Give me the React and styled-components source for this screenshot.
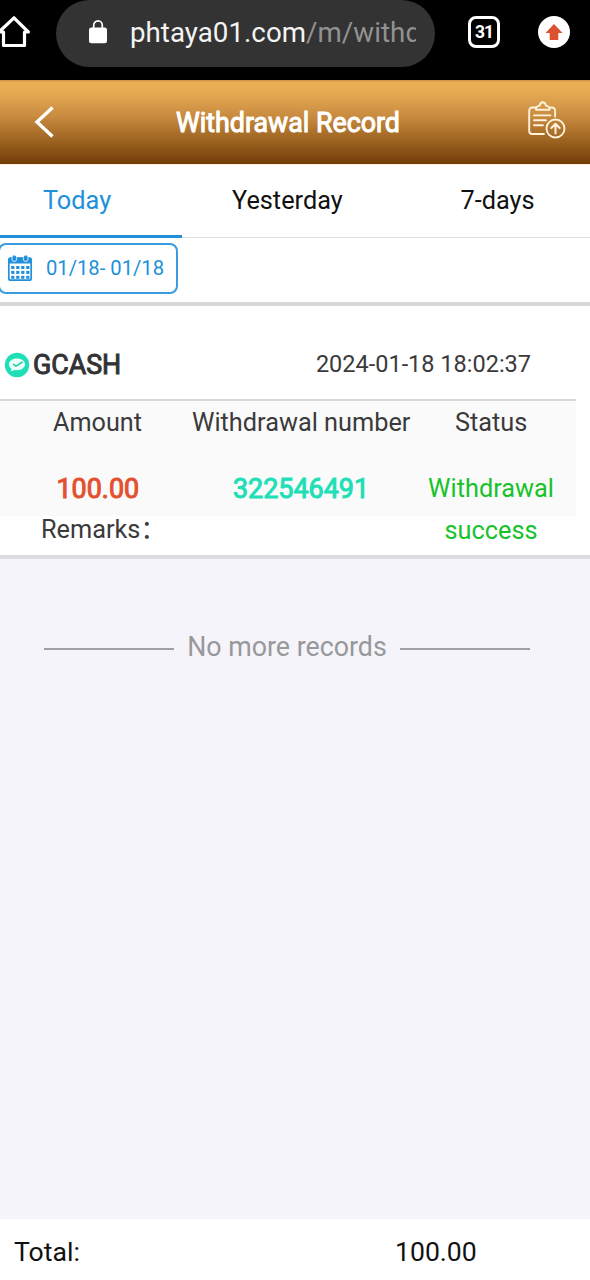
import React from 'react';
import styled, { createGlobalStyle } from 'styled-components';

const GlobalStyle = createGlobalStyle`
  * { box-sizing: border-box; }
  body {
    margin: 0;
    background: #f4f4fa;
    font-family: Roboto, "Noto Sans CJK SC", sans-serif;
    color: #333;
  }
`;

const Page = styled.div`
  width: 590px;
  height: 1280px;
  display: flex;
  flex-direction: column;
  overflow: hidden;
`;

const Text = styled.span`
  display: block;
  padding-top: ${(p) => p.$drop || 0}px;
  white-space: nowrap;
  font-size: ${(p) => p.$size || 26}px;
  line-height: 42px;
  letter-spacing: ${(p) => p.$track || 0}px;
  color: ${(p) => p.$color || '#3a3a3c'};
  -webkit-text-stroke: ${(p) => (p.$heavy ? '1px' : '0')};
`;

/* Browser bar */
const BrowserBar = styled.header`
  flex: none;
  height: 80px;
  background: #000;
  display: flex;
  align-items: flex-start;
`;

const HomeIcon = styled.svg`
  width: 30px;
  height: 34px;
  margin-top: 14px;
`;

const AddressPill = styled.div`
  width: 379px;
  height: 67px;
  margin-left: 26px;
  padding: 0 17px 2px 32px;
  border-radius: 34px;
  background: #333;
  display: flex;
  align-items: center;
`;

const LockIcon = styled.svg`
  width: 20px;
  height: 24px;
  margin-right: 22px;
  margin-bottom: 1px;
`;

const Url = styled.div`
  width: 286px;
  overflow: hidden;
  display: flex;
`;

const TabCount = styled.div`
  width: 32px;
  height: 32px;
  margin: 15.5px 0 0 33px;
  border: 3.5px solid #fff;
  border-radius: 8px;
  color: #fff;
  font-size: 17.5px;
  font-weight: 700;
  letter-spacing: -1px;
  line-height: 26px;
  text-align: center;
`;

const UpdateIcon = styled.svg`
  width: 32px;
  height: 32px;
  margin: 15.5px 0 0 38px;
`;

/* Page header */
const TitleBar = styled.div`
  flex: none;
  height: 85px;
  padding: 0 24px 2px 33px;
  background: linear-gradient(#c98f45 0, #e9ad56 2px, #e9ad56 10px, #c98b3f 36px, #9a611f 62px, #733c08 84px, #fdeede 84px);
  display: flex;
  align-items: center;
`;

const BackIcon = styled.svg`
  width: 22px;
  height: 34px;
  margin-right: 121px;
`;

const ReportIcon = styled.svg`
  width: 40px;
  height: 38px;
  margin: 0 0 4px auto;
`;

/* Tabs */
const Tabs = styled.nav`
  flex: none;
  height: 73px;
  background: #fff;
  box-shadow: inset 0 -1px #dedee0;
  display: flex;
`;

const Tab = styled.div`
  width: ${(p) => p.$width}px;
  padding: 15px 0 0 ${(p) => p.$indent}px;
  border-bottom: 3px solid ${(p) => (p.$active ? '#2090db' : 'transparent')};
`;

const DateBar = styled.div`
  flex: none;
  height: 68px;
  padding-top: 5px;
  background: #fff;
  border-bottom: 4px solid #d8d8da;
`;

const DateButton = styled.div`
  width: 180px;
  height: 51px;
  margin-left: -2px;
  padding: 0 0 1px 7px;
  border: 2px solid #3a9bde;
  border-radius: 8px;
  display: flex;
  align-items: center;
`;

const CalendarIcon = styled.svg`
  width: 26px;
  height: 28px;
  margin-right: 13px;
`;

/* Record */
const Record = styled.section`
  flex: none;
  height: 253px;
  padding-right: 14px;
  background: #fff;
  border-bottom: 4px solid #dcdcde;
  overflow: hidden;
`;

const RecordHead = styled.div`
  height: 95px;
  padding: 37px 45px 0 4px;
  border-bottom: 2px solid #d9d9db;
  display: flex;
`;

const PayIcon = styled.svg`
  width: 26px;
  height: 26px;
  margin: 9px 3px 0 0;
`;

const Timestamp = styled.div`
  margin-left: auto;
`;

const RecordGrid = styled.div`
  height: 115px;
  padding-top: 1px;
  background: #fafafa;
  display: grid;
  grid-template-columns: 192px 218px 166px;
  grid-template-rows: 66px 42px;
`;

const Cell = styled.div`
  padding-left: ${(p) => p.$indent || 0}px;
`;

const StatusText = styled(Text)`
  width: 128px;
  white-space: normal;
  text-align: center;
`;

const Remarks = styled.div`
  padding-left: 41px;
  margin-top: -7px;
`;

const ListEnd = styled.div`
  flex: 1;
  padding: 67px 60px 0 44px;
  display: flex;
  align-items: flex-start;
  justify-content: space-between;
`;

const Rule = styled.div`
  width: 130px;
  height: 2px;
  margin-top: 22px;
  background: #a0a0a3;
`;

const Footer = styled.footer`
  flex: none;
  height: 61px;
  padding: 12px 0 0 14px;
  background: #fff;
  display: grid;
  grid-template-columns: 381px 1fr;
`;

const dots = [0, 1, 2].flatMap((r) => [0, 1, 2, 3].map((c) => [4.2 + c * 5, 12 + r * 4.9]));

export default function App() {
  return (
    <>
      <GlobalStyle />
      <Page>
        <BrowserBar>
          <HomeIcon viewBox="0 0 30 34" fill="none" stroke="#fff" strokeWidth="3.2" strokeLinejoin="round" strokeLinecap="round">
            <path d="M-1 18 14 3.8 28.3 18H24.5V31.5H3.5V18H-1" />
          </HomeIcon>
          <AddressPill>
            <LockIcon viewBox="0 0 20 24">
              <rect x="1" y="7.5" width="18" height="15.8" rx="2.5" fill="#fff" />
              <path d="M5.7 8V5.2a4.3 4.3 0 0 1 8.6 0V8" fill="none" stroke="#fff" strokeWidth="1.7" />
            </LockIcon>
            <Url>
              <Text $size={27.7} $track={0.03} $color="#f4f4f4">phtaya01.com</Text>
              <Text $size={27.7} $track={0.06} $color="#929292">/m/withd</Text>
            </Url>
          </AddressPill>
          <TabCount>31</TabCount>
          <UpdateIcon viewBox="0 0 32 32">
            <circle cx="16" cy="16" r="16" fill="#fff" />
            <path d="M16 8 24.5 17H20.3V24H11.7V17H7.5Z" fill="#dc5130" />
          </UpdateIcon>
        </BrowserBar>

        <TitleBar>
          <BackIcon viewBox="0 0 22 34" fill="none" stroke="#fff" strokeWidth="3.4">
            <path d="M19.5 2.5 4 17 19.5 31.5" />
          </BackIcon>
          <Text $size={26.8} $color="#fff" $heavy $drop={2}>Withdrawal Record</Text>
          <ReportIcon viewBox="0 0 40 38" fill="none" stroke="#fff1dc" strokeWidth="1.9" strokeLinecap="round" strokeLinejoin="round">
            <path d="M9.5 6.5H6.2a3 3 0 0 0-3 3V30a3 3 0 0 0 3 3H18M24.5 6.5h1.6a3 3 0 0 1 3 3v6" />
            <path d="M10 8.8V7.6q0-2.3 3.7-3Q14.3 1.2 16.8 1.2t3.1 3.4q3.7.7 3.7 3V8.8Z" />
            <path d="M8 14.4H24.5M8 19.3H20M8 24.3H17" />
            <circle cx="29.5" cy="27.5" r="9" />
            <path d="M29.5 32.5V23M25.3 27l4.2-4.2 4.2 4.2" strokeWidth="2" />
          </ReportIcon>
        </TitleBar>

        <Tabs>
          <Tab $width={182} $indent={43} $active>
            <Text $size={25.3} $color="#2090db">Today</Text>
          </Tab>
          <Tab $width={222} $indent={50}>
            <Text $size={25.3} $color="#111">Yesterday</Text>
          </Tab>
          <Tab $width={186} $indent={56.5}>
            <Text $size={25.3} $color="#111">7-days</Text>
          </Tab>
        </Tabs>

        <DateBar>
          <DateButton>
            <CalendarIcon viewBox="0 0 26 28">
              <rect x="1.8" y="4" width="22.4" height="22.2" rx="2" fill="#fff" stroke="#2090db" strokeWidth="1.7" />
              <path d="M1.5 9.5V5.5a2 2 0 0 1 2-2h19a2 2 0 0 1 2 2v4Z" fill="#2090db" />
              <rect x="5" y="1" width="4.6" height="6.5" rx="2.3" fill="#2090db" stroke="#fff" strokeWidth=".8" />
              <rect x="16.4" y="1" width="4.6" height="6.5" rx="2.3" fill="#2090db" stroke="#fff" strokeWidth=".8" />
              {dots.map(([x, y]) => (
                <rect key={`${x}-${y}`} x={x} y={y} width="3.2" height="3" fill="#2090db" />
              ))}
            </CalendarIcon>
            <Text $size={20.2} $color="#2090db">01/18- 01/18</Text>
          </DateButton>
        </DateBar>

        <Record>
          <RecordHead>
            <PayIcon viewBox="0 0 26 26">
              <circle cx="13" cy="13" r="12.2" fill="#20dfb6" />
              <path d="M13 6.5c4.7 0 8 2.5 8 5.8s-3.3 5.9-8 5.9c-1 0-1.8-.1-2.6-.3L7 19.6l.4-3C5.8 15.5 5 14 5 12.3c0-3.3 3.3-5.8 8-5.8Z" fill="#e9fffa" />
              <path d="m9 12 3 2.2 6.5-4.4" fill="none" stroke="#20c9a5" strokeWidth="1.5" />
            </PayIcon>
            <Text $size={26.8} $color="#333336" $heavy $drop={1}>GCASH</Text>
            <Timestamp>
              <Text $size={23.5}>2024-01-18 18:02:37</Text>
            </Timestamp>
          </RecordHead>
          <RecordGrid>
            <Cell $indent={53}><Text $size={25.2}>Amount</Text></Cell>
            <Cell><Text $size={25.3}>Withdrawal number</Text></Cell>
            <Cell $indent={45}><Text $size={25.3}>Status</Text></Cell>
            <Cell $indent={56.5}><Text $size={26.9} $color="#e4502f" $heavy>100.00</Text></Cell>
            <Cell $indent={41}><Text $size={26.9} $color="#20dfb6" $heavy>322546491</Text></Cell>
            <Cell $indent={17}><StatusText $size={25.3} $color="#17c22b">Withdrawal success</StatusText></Cell>
          </RecordGrid>
          <Remarks><Text $size={25.3}>Remarks：</Text></Remarks>
        </Record>

        <ListEnd>
          <Rule />
          <Text $size={26.8} $color="#98989b">No more records</Text>
          <Rule />
        </ListEnd>

        <Footer>
          <Text $size={26.6} $color="#111">Total:</Text>
          <Text $size={26.6} $color="#111">100.00</Text>
        </Footer>
      </Page>
    </>
  );
}
